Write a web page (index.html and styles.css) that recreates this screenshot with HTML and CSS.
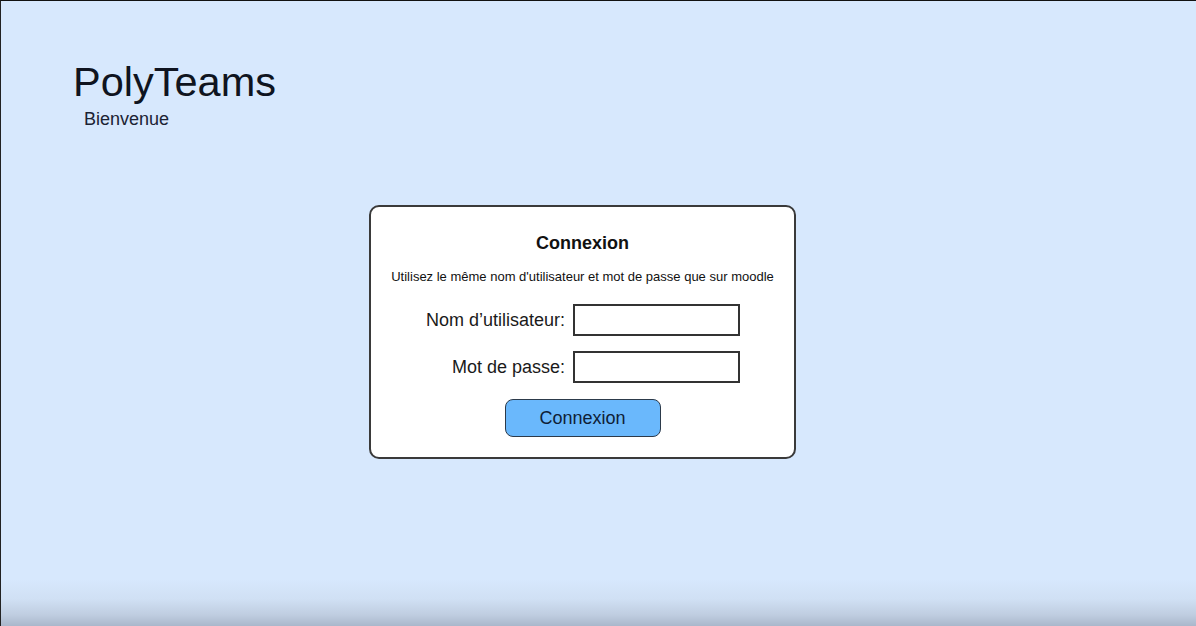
FILE: index.html
```html
<!DOCTYPE html>
<html lang="fr">
<head>
<meta charset="utf-8">
<title>PolyTeams</title>
<link rel="stylesheet" href="styles.css">
</head>
<body>
<div class="page">
  <header class="header">
    <h1 class="brand">PolyTeams</h1>
    <p class="welcome">Bienvenue</p>
  </header>
  <main class="card">
    <h2 class="card-title">Connexion</h2>
    <p class="card-hint">Utilisez le même nom d'utilisateur et mot de passe que sur moodle</p>
    <form class="form">
      <div class="row">
        <label class="label" for="user">Nom d’utilisateur:</label>
        <input class="field" id="user" type="text">
      </div>
      <div class="row">
        <label class="label" for="pass">Mot de passe:</label>
        <input class="field" id="pass" type="password">
      </div>
      <button class="btn" type="button">Connexion</button>
    </form>
  </main>
</div>
</body>
</html>
```
FILE: styles.css
```css
* { box-sizing: border-box; }
html, body { margin: 0; padding: 0; }
body {
  font-family: "Liberation Sans", Arial, sans-serif;
  color: #111;
}
.page {
  width: 1196px;
  height: 626px;
  overflow: hidden;
  border-top: 1px solid #111;
  border-left: 1px solid #222;
  background: linear-gradient(to bottom, #d7e8fd 0, #d7e8fd 578px, #d0e0f4 598px, #bfcde0 614px, #a7b5c9 626px);
  display: flex;
  flex-direction: column;
}
.header {
  padding: 57px 0 0 72px;
}
.brand {
  margin: 0;
  font-weight: normal;
  font-size: 41.5px;
  line-height: 48px;
  color: #0f1420;
}
.welcome {
  margin: 3px 0 0 11px;
  font-size: 18px;
  line-height: 21px;
  color: #1b2233;
}
.card {
  margin: 75px 0 0 368px;
  width: 427px;
  height: 254px;
  background: #fff;
  border: 2px solid #3a3a3a;
  border-radius: 10px;
  display: flex;
  flex-direction: column;
  align-items: center;
  padding-top: 26px;
}
.card-title {
  margin: 0;
  font-size: 18px;
  line-height: 21px;
  font-weight: bold;
  color: #111;
}
.card-hint {
  margin: 15px 0 0;
  font-size: 13px;
  line-height: 15px;
  color: #111;
}
.form {
  margin-top: 20px;
  display: flex;
  flex-direction: column;
  align-items: center;
  width: 100%;
}
.row {
  display: flex;
  align-items: center;
  justify-content: flex-end;
  width: 100%;
  padding-right: 54px;
  gap: 8px;
  margin-bottom: 15px;
}
.label {
  font-size: 18px;
  color: #1a1a1a;
}
.field {
  width: 167px;
  height: 32px;
  border: 2px solid #333;
  border-radius: 0;
  background: #fff;
  padding: 0 4px;
  font: inherit;
}
.btn {
  margin-top: 1px;
  width: 156px;
  height: 38px;
  background: #6ab8fc;
  border: 1.5px solid #2c3a4a;
  border-radius: 8px;
  font-family: "Liberation Sans", Arial, sans-serif;
  font-size: 18px;
  color: #0e2036;
  cursor: pointer;
}
```
